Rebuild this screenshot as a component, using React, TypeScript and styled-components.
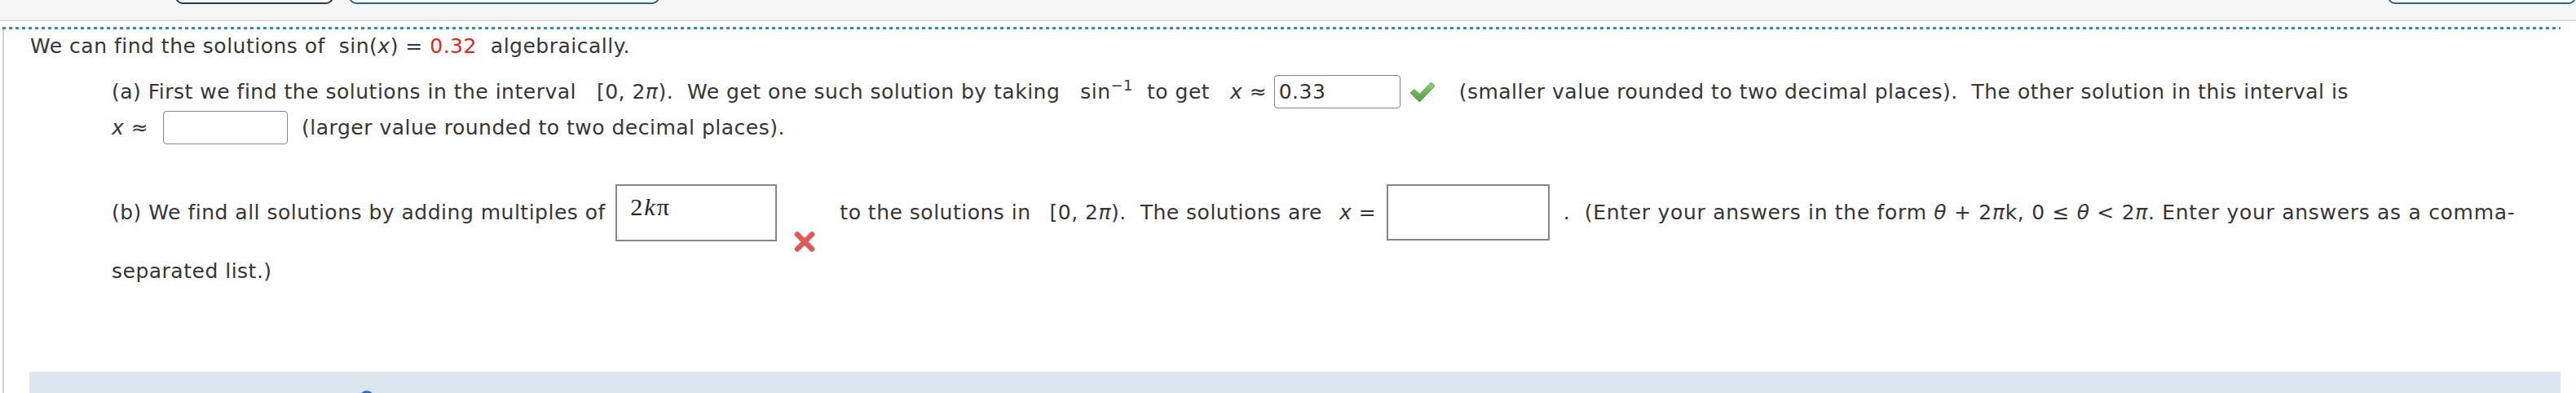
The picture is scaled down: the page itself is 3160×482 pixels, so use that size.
import styled, { createGlobalStyle } from "styled-components";

const Global = createGlobalStyle`
  html, body {
    margin: 0;
    padding: 0;
    background: #fff;
  }
  body {
    width: 3160px;
    overflow: hidden;
    font-family: "DejaVu Sans", Verdana, sans-serif;
    color: #363636;
  }
`;

const Toolbar = styled.div`
  display: flex;
  align-items: flex-end;
  height: 26px;
  box-sizing: border-box;
  padding-bottom: 19px;
  background: #f6f6f6;
  border-bottom: 2px solid #dedede;
  overflow: hidden;
`;

const ToolButton = styled.div<{ $width: number; $tone: string; $push?: string }>`
  flex: none;
  width: ${(p) => p.$width}px;
  height: 40px;
  box-sizing: border-box;
  margin-left: ${(p) => p.$push ?? "0"};
  background: #fff;
  border: 2px solid ${(p) => p.$tone};
  border-radius: 9px;
`;

const Question = styled.div`
  margin-left: 3px;
  padding-right: 19px;
  border-left: 2px solid #d2d2d2;
  font-size: 25px;
  letter-spacing: 0.5px;
`;

const DottedRule = styled.div`
  height: 3px;
  margin-top: 7px;
  margin-left: -2px;
  background: repeating-linear-gradient(90deg, #3b84d6 0 4px, transparent 4px 8px);
`;

const Intro = styled.div`
  margin-top: 6px;
  padding-left: 32px;
  line-height: 30px;
  white-space: pre;
`;

const Part = styled.div<{ $top: number }>`
  margin-top: ${(p) => p.$top}px;
  padding-left: 132px;
`;

const Row = styled.div<{ $height: number; $gap?: number }>`
  display: flex;
  align-items: center;
  height: ${(p) => p.$height}px;
  margin-top: ${(p) => p.$gap ?? 0}px;
  white-space: pre;
`;

const Run = styled.span<{ $spacing?: number }>`
  flex: none;
  ${(p) => (p.$spacing ? `letter-spacing: ${p.$spacing}px;` : "")}
`;

const Math = styled.span<{ $lead?: number }>`
  margin-left: ${(p) => p.$lead ?? 8}px;
`;

const Var = styled.i`
  font-style: italic;
`;

const Red = styled.span`
  color: #e2251c;
`;

const Sup = styled.sup`
  font-size: 18px;
  vertical-align: 10px;
  line-height: 0;
`;

const AnswerBox = styled.div<{ $width: number; $shift?: number }>`
  flex: none;
  width: ${(p) => p.$width}px;
  height: 41px;
  box-sizing: border-box;
  margin-left: ${(p) => p.$shift ?? 0}px;
  padding-left: 5px;
  border: 1px solid #858585;
  border-radius: 4px;
  display: flex;
  align-items: center;
  font-size: 25px;
  color: #333;
`;

const MathBox = styled.div<{ $width: number; $height: number }>`
  flex: none;
  width: ${(p) => p.$width}px;
  height: ${(p) => p.$height}px;
  box-sizing: border-box;
  margin-left: 4px;
  border: 2px solid #868686;
  background: #fff;
  padding: 9px 0 0 16px;
  font-family: "Liberation Serif", "DejaVu Serif", serif;
  font-size: 30px;
  color: #222;
  letter-spacing: 2px;
`;

const Mark = styled.svg<{ $gapLeft: number; $gapRight: number; $drop?: number }>`
  flex: none;
  margin-left: ${(p) => p.$gapLeft}px;
  margin-right: ${(p) => p.$gapRight}px;
  ${(p) => (p.$drop ? `align-self: flex-end; margin-bottom: -${p.$drop}px;` : "")}
`;

const Tail = styled.div`
  margin-top: 21px;
  line-height: 30px;
`;

const Panel = styled.div`
  margin-top: 108px;
  margin-left: 31px;
  height: 40px;
  padding: 23px 0 0 405px;
  box-sizing: border-box;
  background: #dce6ef;
`;

const InfoDot = styled.div`
  width: 18px;
  height: 18px;
  border-radius: 50%;
  background: #3a6cb0;
`;

function CheckIcon() {
  return (
    <Mark $gapLeft={11} $gapRight={29} width="32" height="26" viewBox="0 0 32 26">
      <defs>
        <linearGradient id="ck" x1="0" y1="0" x2="0" y2="1">
          <stop offset="0" stopColor="#8fd07c" />
          <stop offset="1" stopColor="#4e9a3e" />
        </linearGradient>
      </defs>
      <path
        d="M1 14 L6 9.5 L12.5 15.5 L26.5 1 L31 5.5 L12.5 25 Z"
        fill="url(#ck)"
        stroke="#4b8f3b"
        strokeWidth="0.8"
        strokeLinejoin="round"
      />
    </Mark>
  );
}

function CrossIcon() {
  return (
    <Mark $gapLeft={20} $gapRight={29} $drop={13} width="28" height="27" viewBox="0 0 28 27">
      <g stroke="#e0585a" strokeWidth="6.5" strokeLinecap="round">
        <line x1="5" y1="4.5" x2="23" y2="22.5" />
        <line x1="23" y1="4.5" x2="5" y2="22.5" />
      </g>
    </Mark>
  );
}

export default function App() {
  return (
    <>
      <Global />
      <Toolbar>
        <ToolButton $width={194} $tone="#1e3c5c" $push="215px" />
        <ToolButton $width={381} $tone="#2a6395" $push="19px" />
        <ToolButton $width={231} $tone="#2a6395" $push="auto" />
      </Toolbar>
      <Question>
        <DottedRule />
        <Intro>
          We can find the solutions of  sin(<Var>x</Var>) = <Red>0.32</Red>  algebraically.
        </Intro>
        <Part $top={19}>
          <Row $height={43}>
            <Run>
              {"(a) First we find the solutions in the interval  "}
              <Math>
                [0, 2<Var>π</Var>)
              </Math>
              {".  We get one such solution by taking  "}
              <Math>
                sin<Sup>−1</Sup>
              </Math>
              {"  to get  "}
              <Math>
                <Var>x</Var> ≈{" "}
              </Math>
            </Run>
            <AnswerBox $width={155}>0.33</AnswerBox>
            <CheckIcon />
            <Run>(smaller value rounded to two decimal places).  The other solution in this interval is</Run>
          </Row>
          <Row $height={43} $gap={1}>
            <Run>
              <Var>x</Var> ≈
            </Run>
            <AnswerBox $width={153} $shift={18} />
            <Run>  (larger value rounded to two decimal places).</Run>
          </Row>
        </Part>
        <Part $top={46}>
          <Row $height={73}>
            <Run>(b) We find all solutions by adding multiples of </Run>
            <MathBox $width={198} $height={70}>
              2<Var>k</Var>π
            </MathBox>
            <CrossIcon />
            <Run>
              {"to the solutions in  "}
              <Math $lead={6}>
                [0, 2<Var>π</Var>)
              </Math>
              {".  The solutions are  "}
              <Math $lead={4}>
                <Var>x</Var> ={" "}
              </Math>
            </Run>
            <MathBox $width={200} $height={69} />
            <Run $spacing={0.7}>
              {"  .  "}(Enter your answers in the form <Var>θ</Var> + 2<Var>π</Var>k, 0 ≤ <Var>θ</Var> &lt; 2
              <Var>π</Var>. Enter your answers as a comma-
            </Run>
          </Row>
          <Tail>separated list.)</Tail>
        </Part>
        <Panel>
          <InfoDot />
        </Panel>
      </Question>
    </>
  );
}
